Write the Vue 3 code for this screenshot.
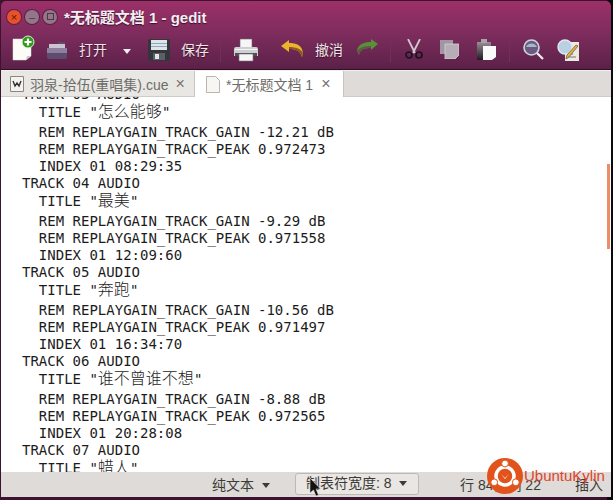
<script setup>
const rows = [
  { a: 'TRACK 03 AUDIO' },
  { a: '  TITLE "', c: '怎么能够', z: '"' },
  { a: '  REM REPLAYGAIN_TRACK_GAIN -12.21 dB' },
  { a: '  REM REPLAYGAIN_TRACK_PEAK 0.972473' },
  { a: '  INDEX 01 08:29:35' },
  { a: 'TRACK 04 AUDIO' },
  { a: '  TITLE "', c: '最美', z: '"' },
  { a: '  REM REPLAYGAIN_TRACK_GAIN -9.29 dB' },
  { a: '  REM REPLAYGAIN_TRACK_PEAK 0.971558' },
  { a: '  INDEX 01 12:09:60' },
  { a: 'TRACK 05 AUDIO' },
  { a: '  TITLE "', c: '奔跑', z: '"' },
  { a: '  REM REPLAYGAIN_TRACK_GAIN -10.56 dB' },
  { a: '  REM REPLAYGAIN_TRACK_PEAK 0.971497' },
  { a: '  INDEX 01 16:34:70' },
  { a: 'TRACK 06 AUDIO' },
  { a: '  TITLE "', c: '谁不曾谁不想', z: '"' },
  { a: '  REM REPLAYGAIN_TRACK_GAIN -8.88 dB' },
  { a: '  REM REPLAYGAIN_TRACK_PEAK 0.972565' },
  { a: '  INDEX 01 20:28:08' },
  { a: 'TRACK 07 AUDIO' },
  { a: '  TITLE "', c: '蜡人', z: '"' }
]
</script>

<template>
  <div class="win">
    <header class="titlebar">
      <div class="btns">
        <span class="wb close">×</span>
        <span class="wb">–</span>
        <span class="wb"><i class="sq"></i></span>
      </div>
      <span class="wtitle">*无标题文档 1 - gedit</span>
    </header>

    <div class="toolbar">
      <svg class="ic first" width="24" height="26" viewBox="0 0 24 26">
        <path d="M2 4h13l5 5v12l-5 4H2z" fill="#fbfbf8" stroke="#ddd" stroke-width=".5"/>
        <path d="M15 25l5-4h-4z" fill="#c8c8c0"/>
        <circle cx="17" cy="7" r="6" fill="#2f9a1c" stroke="#dff0d0"/>
        <path d="M17 3.500v7M13.500 7h7" stroke="#fff" stroke-width="2.200"/>
      </svg>
      <svg class="ic open" width="20" height="17" viewBox="0 0 20 17">
        <path d="M11 0h7v5h-7z" fill="#5f4a68"/>
        <path d="M2 2h16v5H2z" fill="#cbc3cf"/>
        <path d="M0 6h20v9a2 2 0 0 1-2 2H2a2 2 0 0 1-2-2z" fill="#5d4b70"/>
        <path d="M0 6h20v5H0z" fill="#8f7f9f"/>
      </svg>
      <span class="lbl l-open">打开</span>
      <i class="caret"></i>
      <svg class="ic save" width="22" height="22" viewBox="0 0 22 22">
        <rect width="22" height="22" rx="2" fill="#33373b"/>
        <path d="M3 1h16v10H3z" fill="#dfe4e9"/>
        <path d="M3 4.500h16M3 7.500h16" stroke="#8fa8c2"/>
        <path d="M5 14h12v7H5z" fill="#5a6066"/>
        <path d="M7 15h4v5H7z" fill="#e3e5e7"/>
      </svg>
      <span class="lbl l-save">保存</span>
      <i class="sep s1"></i>
      <svg class="ic print" width="24" height="24" viewBox="0 0 24 24">
        <path d="M6 1h12v9H6z" fill="#f6f6f6" stroke="#666" stroke-width=".6"/>
        <path d="M2 9h20a2 2 0 0 1 2 2v7H0v-7a2 2 0 0 1 2-2z" fill="#cfcfd1"/>
        <path d="M1 11.500h22" stroke="#f4f4f4"/>
        <path d="M1 15h22v3H1z" fill="#4d5054"/>
        <path d="M5 16h14v7H5z" fill="#f6f6f6" stroke="#777" stroke-width=".6"/>
      </svg>
      <svg class="ic undo" width="22" height="17" viewBox="0 0 22 17">
        <path d="M0 6l8-6v3c7 0 13 2 14 10l-1 4c-2-6-5-8-13-8v3z" fill="#eab42c"/>
        <path d="M22 13l-1 4c-2-6-5-8-13-8V7c7 0 12 2 14 6z" fill="#8a5a22"/>
      </svg>
      <span class="lbl l-undo">撤消</span>
      <svg class="ic redo" width="21" height="16" viewBox="0 0 21 16">
        <path d="M21 5l-7-5v3C7 3 1 5 0 12l2 4c1-6 6-7 12-7v2z" fill="#5b8f3a"/>
        <path d="M0 12l2 4c1-6 6-7 12-7V7C8 7 3 8 0 12z" fill="#5e5a45"/>
      </svg>
      <i class="sep s2"></i>
      <svg class="ic cut" width="18" height="20" viewBox="0 0 18 20">
        <path d="M3 0l7 14M15 0L8 14" stroke="#cfc8d0" stroke-width="1.800" fill="none"/>
        <circle cx="4" cy="16" r="3" fill="none" stroke="#1c1420" stroke-width="1.700"/>
        <circle cx="14" cy="16" r="3" fill="none" stroke="#1c1420" stroke-width="1.700"/>
      </svg>
      <svg class="ic copy" width="19" height="19" viewBox="0 0 19 19">
        <path d="M0 0h13v14H0z" fill="#a197a2"/>
        <path d="M5 4h14v11l-4 4H5z" fill="#b7adb6" stroke="#d6ced6" stroke-width=".8"/>
      </svg>
      <svg class="ic paste" width="19" height="22" viewBox="0 0 19 22">
        <defs>
          <linearGradient id="clip" x1="0" y1="0" x2="0" y2="1">
            <stop offset="0" stop-color="#9a8f9a"/>
            <stop offset="1" stop-color="#1d1a1f"/>
          </linearGradient>
        </defs>
        <path d="M0 3h14v18H0z" fill="url(#clip)"/>
        <path d="M4 0h6v4H4z" fill="#a9a3a9"/>
        <path d="M6 7h13v11l-4 3H6z" fill="#fafafa"/>
      </svg>
      <i class="sep s3"></i>
      <svg class="ic find" width="21" height="21" viewBox="0 0 21 21">
        <path d="M13 13l7 7" stroke="#f0f0f0" stroke-width="2.200"/>
        <circle cx="8.500" cy="8.500" r="7.500" fill="#6d5a82" stroke="#c9d6e2" stroke-width="1.600"/>
        <path d="M3 8a6 6 0 0 1 11 0z" fill="#a7b7ca"/>
      </svg>
      <svg class="ic replace" width="22" height="22" viewBox="0 0 22 22">
        <path d="M8 3h14v19H8z" fill="#ece9e0"/>
        <path d="M10 18h9M10 15h6" stroke="#777"/>
        <circle cx="8" cy="8" r="7" fill="#b9cfe2" stroke="#dfe9f2" stroke-width="1.400"/>
        <path d="M21 7l-9 11-3 2 1-4 9-10z" fill="#e9b23c" stroke="#3a3a3a" stroke-width=".6"/>
      </svg>
    </div>

    <div class="tabs">
      <div class="tab inactive">
        <svg class="doc" width="14" height="16" viewBox="0 0 14 16">
          <path d="M.5 .5h13v15H.5z" fill="#f4f2ee" stroke="#8c8880"/>
          <path d="M3 5l2 5 2-3 2 3 2-5" stroke="#333" stroke-width="1.400" fill="none"/>
        </svg>
        <span>羽泉-拾伍(重唱集).cue</span>
        <span class="x">×</span>
      </div>
      <div class="tab active">
        <svg class="doc" width="14" height="17" viewBox="0 0 14 17">
          <path d="M.5 .5h9l4 4v12H.5z" fill="#f7f6f3" stroke="#b8b5ae"/>
        </svg>
        <span>*无标题文档 1</span>
        <span class="x">×</span>
      </div>
    </div>

    <main class="editor">
      <div class="code">
        <div v-for="r in rows" :key="r.a + r.c" class="row" :class="{ title: r.c }">{{ r.a }}<span v-if="r.c" class="cjk">{{ r.c }}</span>{{ r.z }}</div>
      </div>
      <i class="scrollthumb"></i>
    </main>

    <footer class="status">
      <span class="st-lang">纯文本 <i class="caret dark"></i></span>
      <span class="st-tab">制表符宽度: 8 <i class="caret dark"></i></span>
      <span class="st-pos">行 84，列 22</span>
      <span class="st-ins">插入</span>
    </footer>

    <div class="logo">
      <svg width="36" height="36" viewBox="0 0 36 36">
        <circle cx="18" cy="18" r="18" fill="#e2531c"/>
        <circle cx="18" cy="18" r="9" fill="none" stroke="#fff" stroke-width="3.500"/>
        <circle cx="18" cy="5.500" r="3.400" fill="#fff" stroke="#e2531c"/>
        <circle cx="7.200" cy="24.300" r="3.400" fill="#fff" stroke="#e2531c"/>
        <circle cx="28.800" cy="24.300" r="3.400" fill="#fff" stroke="#e2531c"/>
        <path d="M14 16l4 4 4-4-4 5z" fill="#fff"/>
      </svg>
      <span>UbuntuKylin</span>
    </div>

    <svg class="cursor" width="12" height="18" viewBox="0 0 12 18">
      <path d="M1 0v15l3.500-3 2.500 6 2.500-1-2.500-6h4.500z" fill="#111" stroke="#ddd" stroke-width=".6"/>
    </svg>
  </div>
</template>

<style scoped>
.win {
  position: relative;
  width: 613px;
  height: 500px;
  box-sizing: border-box;
  display: flex;
  flex-direction: column;
  overflow: hidden;
  background: linear-gradient(90deg, #3c1430 0 99%, #0c0a0c 99%);
  padding: 1px 2px 3px 1px;
  font-family: "Liberation Sans", "Noto Sans CJK SC", sans-serif;
}
.titlebar {
  height: 31px;
  flex: none;
  display: flex;
  align-items: center;
  background: linear-gradient(#9c3069, #7f2d5e);
  border-radius: 5px 5px 0 0;
}
.btns {
  display: flex;
  gap: 4px;
  margin-left: 6px;
  width: 57px;
}
.wb {
  width: 14px;
  height: 14px;
  border-radius: 50%;
  background: #94758a;
  color: #4a3a40;
  font-size: 11px;
  line-height: 14px;
  text-align: center;
  display: flex;
  align-items: center;
  justify-content: center;
  box-shadow: 0 0 0 1px #5c2046;
}
.wb.close {
  background: #e8512a;
  color: #5a1a08;
}
.sq {
  width: 5px;
  height: 5px;
  border: 1px solid #4a3a40;
}
.wtitle {
  font-size: 15px;
  font-weight: 700;
  color: #f6eef2;
  text-shadow: 0 1px 1px #3a1029;
}
.toolbar {
  position: relative;
  height: 38px;
  flex: none;
  background: linear-gradient(#7f2d5e, #5b2148);
  border-bottom: 1px solid #2f1026;
  box-sizing: border-box;
}
.ic,
.lbl,
.caret,
.sep {
  position: absolute;
}
.first { left: 10px; top: 3px; }
.open { left: 46px; top: 10px; }
.lbl {
  color: #efe6ea;
  font-size: 14px;
  top: 9px;
  line-height: 18px;
  text-shadow: 0 1px 1px #3a1029;
}
.l-open { left: 78px; }
.caret {
  width: 0;
  height: 0;
  border-left: 4px solid transparent;
  border-right: 4px solid transparent;
  border-top: 5px solid #eee;
}
.toolbar .caret { left: 122px; top: 17px; }
.save { left: 147px; top: 7px; }
.l-save { left: 180px; }
.print { left: 233px; top: 6px; }
.undo { left: 280px; top: 8px; }
.l-undo { left: 314px; }
.redo { left: 356px; top: 7px; }
.cut { left: 404px; top: 7px; }
.copy { left: 439px; top: 8px; }
.paste { left: 476px; top: 7px; }
.find { left: 522px; top: 7px; }
.replace { left: 556px; top: 7px; }
.sep {
  top: 8px;
  width: 1px;
  height: 22px;
  background: #6d3259;
}
.s1 { left: 219px; }
.s2 { left: 389px; }
.s3 { left: 508px; }
.tabs {
  height: 27px;
  flex: none;
  display: flex;
  background: #dfdbd8;
  border-top: 1px solid #f2f0ee;
  border-bottom: 1px solid #cfcbc7;
  box-sizing: border-box;
  font-size: 14px;
  color: #6f6c68;
}
.tab {
  display: flex;
  align-items: center;
  box-sizing: border-box;
}
.inactive {
  width: 194px;
  padding-left: 9px;
  background: #e9e7e4;
  border-right: 1px solid #c7c3bf;
}
.inactive .x { margin-left: 7px; }
.active {
  width: 149px;
  background: #fff;
  margin-bottom: -1px;
  padding-left: 11px;
  border-right: 1px solid #c7c3bf;
}
.doc { margin-right: 6px; flex: none; }
.x {
  font-size: 16px;
  margin-left: 8px;
  color: #77736f;
}
.editor {
  position: relative;
  flex: 1;
  min-height: 0;
  overflow: hidden;
  background: #fff;
}
.code {
  margin-top: -11px;
  margin-left: 21px;
  font-family: "DejaVu Sans Mono", "Noto Sans CJK SC", monospace;
  font-size: 14px;
  color: #1c1c1c;
  white-space: pre;
}
.row {
  height: 17px;
  line-height: 17px;
}
.row.title {
  height: 21px;
  line-height: 19px;
}
.cjk {
  font-family: "Noto Sans CJK SC", sans-serif;
  font-size: 16px;
  font-weight: 300;
  line-height: 0;
}
.scrollthumb {
  position: absolute;
  right: 1px;
  top: 67px;
  width: 3px;
  height: 85px;
  background: #ec8c68;
}
.status {
  position: relative;
  height: 25px;
  flex: none;
  background: #dfdbd8;
  font-size: 14px;
  color: #3c3b37;
}
.status > span {
  position: absolute;
  top: 4px;
  line-height: 19px;
}
.caret.dark {
  position: static;
  display: inline-block;
  margin-left: 4px;
  vertical-align: 2px;
  border-top-color: #3c3b37;
}
.st-lang { left: 211px; }
.st-tab {
  left: 294px;
  top: 1px !important;
  width: 124px;
  height: 22px;
  box-sizing: border-box;
  padding-left: 10px;
  border: 1px solid #bcb8b4;
  border-radius: 3px;
  background: #e9e6e3;
}
.st-pos { left: 459px; }
.st-ins { left: 574px; }
.logo {
  position: absolute;
  left: 487px;
  top: 458px;
  display: flex;
  align-items: center;
  height: 36px;
  color: #e0442a;
  font-size: 15px;
}
.logo span { margin-top: -1px; margin-left: 1px; }
.cursor {
  position: absolute;
  left: 309px;
  top: 478px;
}
</style>
